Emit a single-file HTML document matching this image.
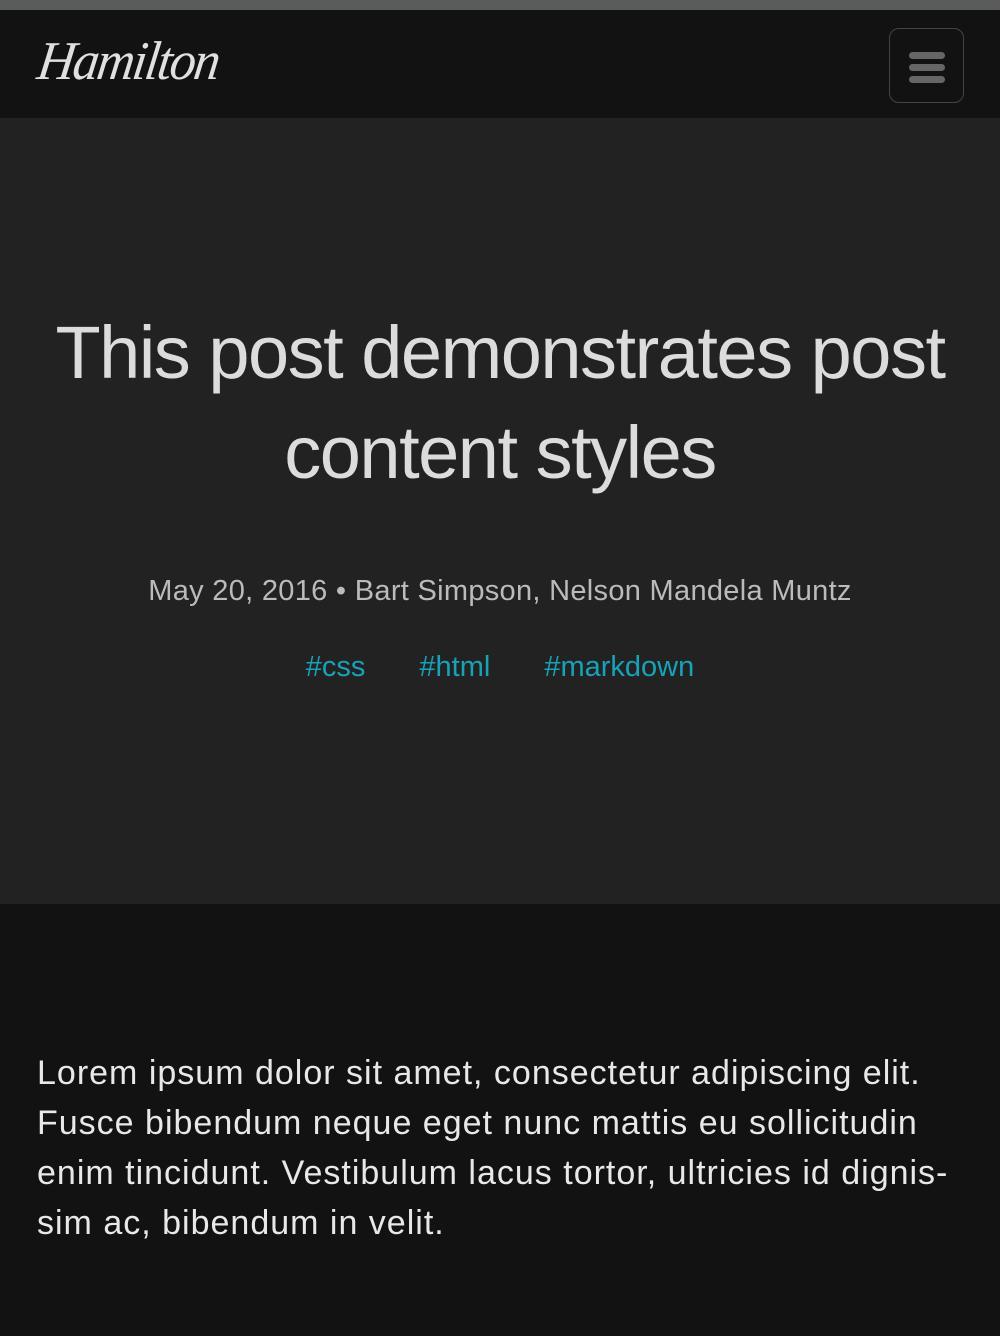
<!DOCTYPE html>
<html><head><meta charset="utf-8"><style>
*{margin:0;padding:0;box-sizing:border-box}
body{width:1000px;height:1336px;background:#121212;font-family:"Liberation Sans","DejaVu Sans",sans-serif;overflow:hidden}
.top{height:10px;background:#5a5c5c}
header{height:108px;background:#121212;position:relative}
.logo{position:absolute;left:38px;top:22px;font-family:"Liberation Serif",serif;font-style:italic;font-size:52px;color:#e0e0e0;letter-spacing:-2px;transform:skewX(-8deg) scaleY(1.05)}
.btn{position:absolute;left:889px;top:18px;width:75px;height:75px;border:1px solid #444;border-radius:10px}
.btn i{position:absolute;left:19px;width:36px;height:7px;border-radius:4px;background:#666}
.hero{height:786px;background:#222;text-align:center;position:relative}
h1{position:absolute;top:185px;left:0;right:0;font-size:74px;font-weight:normal;color:#dcdcdc;line-height:100px;letter-spacing:-1.5px}
.meta{position:absolute;top:457px;left:0;right:0;font-size:29px;color:#bbb;letter-spacing:0.3px}
.tags{position:absolute;top:533px;left:0;right:0;font-size:29px;color:#17a2b8}
.tags span{margin:0 27px}
p{position:absolute;top:1048px;left:37px;width:960px;font-size:34px;line-height:50px;color:#e8e8e8;letter-spacing:1px;white-space:nowrap}
</style></head><body>
<div class="top"></div>
<header><div class="logo">Hamilton</div><div class="btn"><i style="top:23px"></i><i style="top:35px"></i><i style="top:47px"></i></div></header>
<div class="hero">
<h1>This post demonstrates post<br>content styles</h1>
<div class="meta">May 20, 2016 • Bart Simpson, Nelson Mandela Muntz</div>
<div class="tags"><span>#css</span><span>#html</span><span>#markdown</span></div>
</div>
<p>Lorem ipsum dolor sit amet, consectetur adipiscing elit.<br>Fusce bibendum neque eget nunc mattis eu sollicitudin<br>enim tincidunt. Vestibulum lacus tortor, ultricies id dignis-<br>sim ac, bibendum in velit.</p>
</body></html>
